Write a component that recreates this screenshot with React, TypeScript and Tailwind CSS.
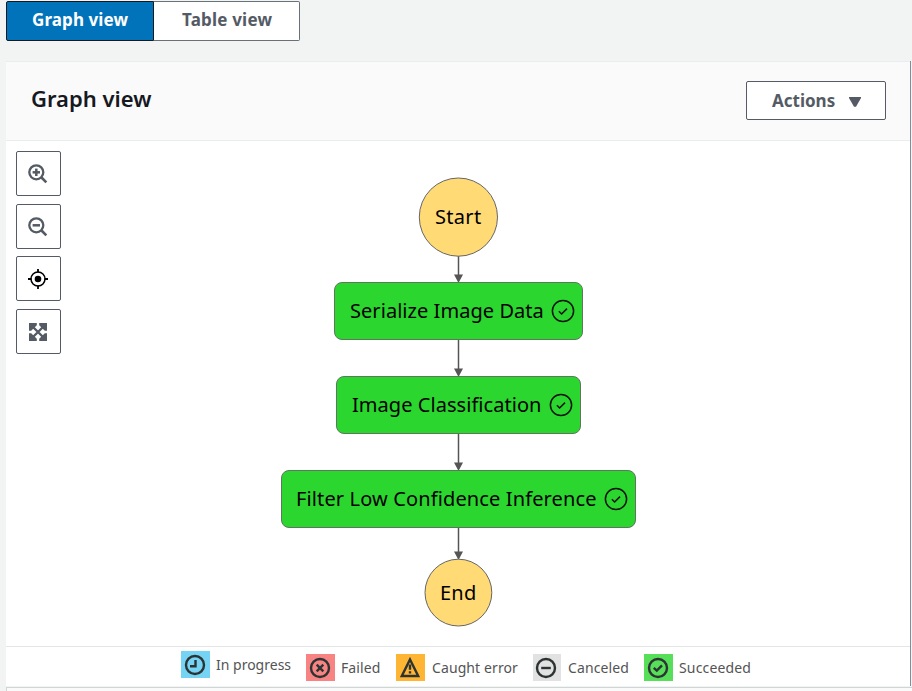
import type { ReactNode } from 'react';

function ToolButton({ children, className = '' }: { children: ReactNode; className?: string }) {
  return (
    <button
      className={`flex h-[45px] w-[45px] items-center justify-center rounded-[2px] border border-[#545b64] bg-white pr-[2px] ${className}`}
    >
      {children}
    </button>
  );
}

function Magnifier({ plus }: { plus?: boolean }) {
  return (
    <svg width="20" height="20" viewBox="0 0 20 20" fill="none" stroke="#545b64" strokeWidth="2.3">
      <circle cx="8.3" cy="8.3" r="7" />
      <path d="M13 13 L18.3 18.3" strokeWidth="2.6" />
      <path d="M4.6 8.3 H12" strokeWidth="2.5" />
      {plus && <path d="M8.3 4.6 V12" strokeWidth="2.5" />}
    </svg>
  );
}

function CircleCheck() {
  return (
    <svg className="absolute right-[7px] top-[16px]" width="24" height="24" viewBox="0 0 24 24" fill="none" stroke="#0b130b">
      <circle cx="12" cy="12" r="10.6" strokeWidth="1.5" />
      <path d="M7.9 12.3 L10.6 15 L16 9.6" strokeWidth="1.5" />
    </svg>
  );
}

function StateNode({ className, label, tracking }: { className: string; label: string; tracking: string }) {
  return (
    <div className={`absolute h-[58px] rounded-[8px] border border-[#5f7560] bg-[#2bd62e] ${className}`}>
      <span className={`absolute top-[14px] text-[20px] leading-[28px] text-black ${tracking}`}>{label}</span>
      <CircleCheck />
    </div>
  );
}

function LegendItem({
  className,
  swatch,
  label,
  text,
  children,
}: {
  className: string;
  swatch: string;
  label: string;
  text: string;
  children: ReactNode;
}) {
  return (
    <div className={`flex h-[27px] shrink-0 items-center ${className}`}>
      <span className={`flex h-[27px] shrink-0 items-center justify-center pr-[2px] ${swatch}`}>
        <svg width="22" height="22" viewBox="0 0 22 22" fill="none" stroke="#2c3333" strokeWidth="2.4">
          {children}
        </svg>
      </span>
      <span className={`text-[14px] leading-5 text-[#545454] ${text}`}>{label}</span>
    </div>
  );
}

export default function App() {
  return (
    <div className="flex h-[691px] w-[912px] flex-col overflow-hidden whitespace-nowrap bg-[#f2f4f3] font-['Noto_Sans','Open_Sans',sans-serif]">
      <div className="flex h-[61px] shrink-0 pl-[6px] pt-px">
        <button className="h-10 w-[148px] rounded-l-[2px] border border-[#16191f] bg-[#0073bb] pl-[25px] text-left text-[17px] leading-[36px] font-bold tracking-[0.1px] text-white">
          <span className="block h-[38px]">Graph view</span>
        </button>
        <button className="h-10 w-[146px] rounded-r-[2px] border border-l-0 border-[#687078] bg-white pl-[28px] text-left text-[17px] leading-[36px] font-bold tracking-[0.2px] text-[#545b64]">
          <span className="block h-[38px]">Table view</span>
        </button>
      </div>

      <section className="ml-[6px] mr-px flex h-[625px] shrink-0 flex-col border-r border-r-[#858c96] bg-white">
        <header className="flex h-[80px] shrink-0 items-start justify-between border-y border-[#eaeded] bg-[#fafafa] pl-[25px] pr-[24px]">
          <h2 className="mt-[21px] text-[22px] leading-[30px] font-semibold text-[#16191f]">Graph view</h2>
          <button className="mt-[19px] flex h-[39px] w-[140px] items-center rounded-[2px] border border-[#545b64] bg-white pl-[25px] text-[17px] font-bold text-[#545b64]">
            <span>Actions</span>
            <svg className="ml-[14px] mt-[2px]" width="12" height="10" viewBox="0 0 12 10" fill="#545b64">
              <path d="M0 0 H12 V1 L7 9.8 H5 L0 1 Z" />
            </svg>
          </button>
        </header>

        <div className="relative h-[505px] shrink-0">
          <div className="flex flex-col pl-[10px] pt-[10px]">
            <ToolButton><Magnifier plus /></ToolButton>
            <ToolButton className="mt-[8px]"><Magnifier /></ToolButton>
            <ToolButton className="mt-[7px]">
              <svg width="20" height="20" viewBox="0 0 20 20" fill="none" stroke="#000">
                <circle cx="10" cy="10" r="7" strokeWidth="1.5" />
                <circle cx="10" cy="10" r="3.3" fill="#000" stroke="none" />
                <path d="M10 0 V3.5 M10 16.5 V20 M0 10 H3.5 M16.5 10 H20" strokeWidth="1.8" />
              </svg>
            </ToolButton>
            <ToolButton className="mt-[8px]">
              <svg width="18" height="18" viewBox="0 0 18 18" fill="#545b64">
                <path d="M0 0 H7.8 V2.2 L2.2 7.8 H0 Z M18 0 V7.8 H15.8 L10.2 2.2 V0 Z M0 18 V10.2 H2.2 L7.8 15.8 V18 Z M18 18 H10.2 V15.8 L15.8 10.2 H18 Z" />
                <path d="M3 3 L15 15 M15 3 L3 15" stroke="#545b64" strokeWidth="2.4" />
              </svg>
            </ToolButton>
          </div>

          <svg className="absolute left-0 top-0" width="904" height="505" viewBox="6 141 904 505" stroke="#555" fill="#555">
            {[[256, 282], [339, 376], [433, 470], [527, 559]].map(([from, to]) => (
              <g key={from}>
                <path d={`M458.5 ${from} V${to - 6}`} strokeWidth="1.5" />
                <path d={`M454 ${to - 7.5} H463 L458.5 ${to + 1} Z`} stroke="none" />
              </g>
            ))}
            <circle cx="458.4" cy="217.1" r="39.1" fill="#ffda75" stroke="#666" />
            <circle cx="458.4" cy="592.6" r="33.4" fill="#ffda75" stroke="#666" />
          </svg>
          <span className="absolute left-[429px] top-[62px] text-[20px] leading-[28px] tracking-[0.3px] text-black">Start</span>
          <span className="absolute left-[434px] top-[438px] text-[20px] leading-[28px] tracking-[0.2px] text-black">End</span>
          <StateNode className="left-[328px] top-[141px] w-[249px]" label="Serialize Image Data" tracking="left-[15px] tracking-[0.05px]" />
          <StateNode className="left-[330px] top-[235px] w-[245px]" label="Image Classification" tracking="left-[15px] tracking-[0.05px]" />
          <StateNode className="left-[275px] top-[329px] w-[355px]" label="Filter Low Confidence Inference" tracking="left-[14px] tracking-[0.13px]" />
        </div>

        <footer className="flex h-[40px] shrink-0 items-start border-t border-[#e2e6e6] pl-[175px]">
          <LegendItem className="mt-[4px] w-[125px]" swatch="w-[29px] bg-[#75d3f3]" label="In progress" text="ml-[6px]">
            <circle cx="11" cy="11" r="9" />
            <path d="M11.5 6 V12.2 H6" />
          </LegendItem>
          <LegendItem className="mt-[7px] w-[90px]" swatch="w-[29px] bg-[#f88383]" label="Failed" text="ml-[6px] tracking-[0.1px]">
            <circle cx="11" cy="11" r="9" />
            <path d="M7.7 7.7 L14.3 14.3 M14.3 7.7 L7.7 14.3" />
          </LegendItem>
          <LegendItem className="mt-[7px] w-[137px]" swatch="w-[29px] bg-[#ffb534]" label="Caught error" text="ml-[7px] tracking-[0.1px]">
            <path d="M11 2.5 L19.2 19 H2.8 Z" />
            <path d="M11 7.5 V12.8 M11 14.3 V16.5" />
          </LegendItem>
          <LegendItem className="mt-[7px] w-[111px]" swatch="w-[28px] bg-[#e2e2e2]" label="Canceled" text="ml-[7px] tracking-[0.1px]">
            <circle cx="11" cy="11" r="9" />
            <path d="M6.2 11 H15.8" />
          </LegendItem>
          <LegendItem className="mt-[7px]" swatch="w-[29px] bg-[#57df59]" label="Succeeded" text="ml-[6px] tracking-[0.15px]">
            <circle cx="11" cy="11" r="9" />
            <path d="M6.8 10.8 L9.8 13.6 L15 8.3" />
          </LegendItem>
        </footer>
      </section>
      <div className="ml-[6px] mt-px h-[4px] border-l border-t border-[#d0d6d6] bg-[#fafafa]" />
    </div>
  );
}
